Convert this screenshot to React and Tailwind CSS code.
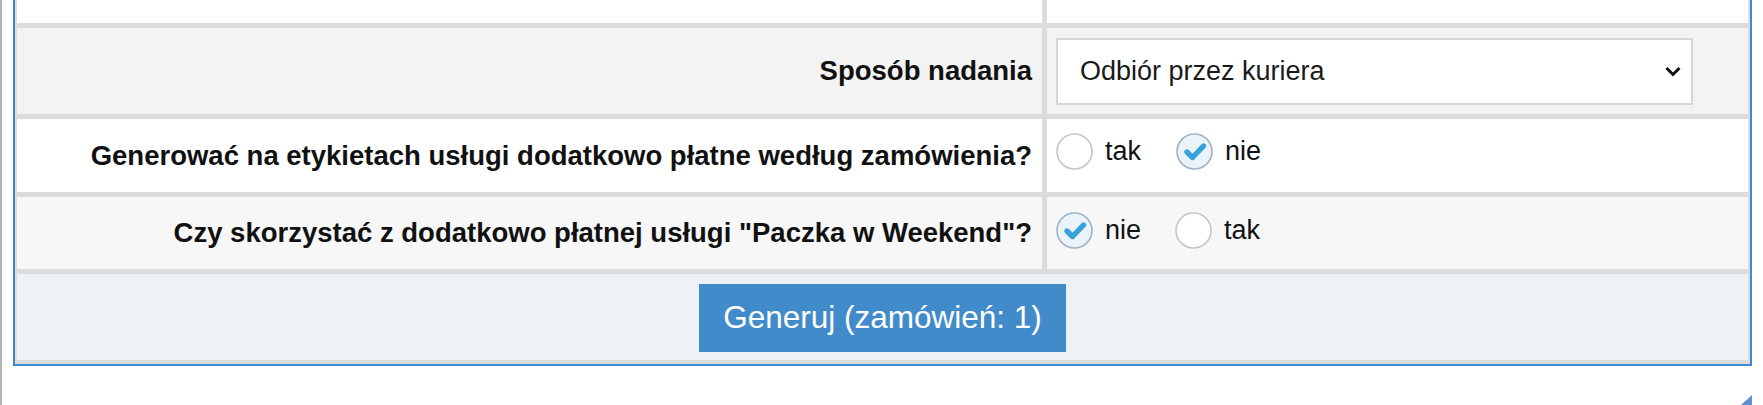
import React from 'react';

const font = { fontFamily: '"Liberation Sans", Arial, Helvetica, sans-serif' };

const Radio = ({ checked, label }) => (
  <label className="flex items-center">
    <svg width="37" height="37" viewBox="0 0 37 37" className="shrink-0">
      <circle
        cx="18.5"
        cy="18.5"
        r="17.5"
        fill={checked ? '#eaf3fa' : '#ffffff'}
        stroke={checked ? '#9fb3c3' : '#c6c6c6'}
        strokeWidth="1.6"
      />
      {checked && (
        <path
          d="M11 19 L16.5 24.5 L27.5 13"
          fill="none"
          stroke="#36a2d8"
          strokeWidth="5.4"
          strokeLinecap="round"
          strokeLinejoin="round"
        />
      )}
    </svg>
    <span className="ml-[12px] text-[27px] text-[#111]">{label}</span>
  </label>
);

const LabelCell = ({ children, bg }) => (
  <div className={`flex items-center justify-end pr-[10px] text-[27.5px] font-bold text-[#111] ${bg}`}>
    {children}
  </div>
);

export default function App() {
  return (
    <div className="h-[405px] w-full overflow-hidden bg-white" style={font}>
      <div className="flex h-full border-l-2 border-[#b4b4b4]">
        <div className="flex flex-col pl-[11px]">
          {/* Panel */}
          <div className="w-[1739px] border-x-2 border-b-2 border-[#3d89d4]">
            <div className="grid grid-cols-[1025px_1fr] gap-[5px] bg-[#dcdcdc] px-[2px] pb-[4px]">
              {/* cut off row on top */}
              <div className="h-[23px] bg-white" />
              <div className="h-[23px] bg-white" />

              {/* Sposob nadania */}
              <LabelCell bg="bg-[#f3f3f3] h-[86px]">Sposób nadania</LabelCell>
              <div className="flex h-[86px] items-start bg-[#f3f3f3] pl-[9px] pt-[10px]">
                <div className="flex h-[67px] w-[637px] items-center justify-between border-2 border-[#d6d6d6] bg-white pl-[22px] pr-[10px]">
                  <span className="text-[27px] text-[#1a1a1a]">Odbiór przez kuriera</span>
                  <svg width="16" height="11" viewBox="0 0 16 11">
                    <polyline points="1.5,2 8,8.5 14.5,2" fill="none" stroke="#111" strokeWidth="3" />
                  </svg>
                </div>
              </div>

              {/* uslugi dodatkowo platne */}
              <LabelCell bg="bg-white h-[73px]">
                Generować na etykietach usługi dodatkowo płatne według zamówienia?
              </LabelCell>
              <div className="flex h-[73px] items-start gap-[35px] bg-white pl-[9px] pt-[12px]">
                <Radio label="tak" />
                <Radio checked label="nie" />
              </div>

              {/* Paczka w Weekend */}
              <LabelCell bg="bg-[#f7f7f7] h-[72px]">
                Czy skorzystać z dodatkowo płatnej usługi "Paczka w Weekend"?
              </LabelCell>
              <div className="flex h-[72px] items-start gap-[34px] bg-[#f7f7f7] pl-[9px] pt-[13px]">
                <Radio checked label="nie" />
                <Radio label="tak" />
              </div>

              {/* Footer */}
              <div className="col-span-2 flex h-[86px] items-start justify-center bg-[#eef1f6] pt-[10px]">
                <button
                  type="button"
                  className="h-[68px] w-[367px] bg-[#428bca] text-[31.5px] text-white"
                >
                  Generuj (zamówień: 1)
                </button>
              </div>
            </div>
          </div>

          {/* resize grip */}
          <div className="mt-[29px] flex justify-end">
            <svg width="11" height="10" viewBox="0 0 11 10">
              <polygon points="11,0 11,10 0,10" fill="#5b8fd8" />
            </svg>
          </div>
        </div>
      </div>
    </div>
  );
}
